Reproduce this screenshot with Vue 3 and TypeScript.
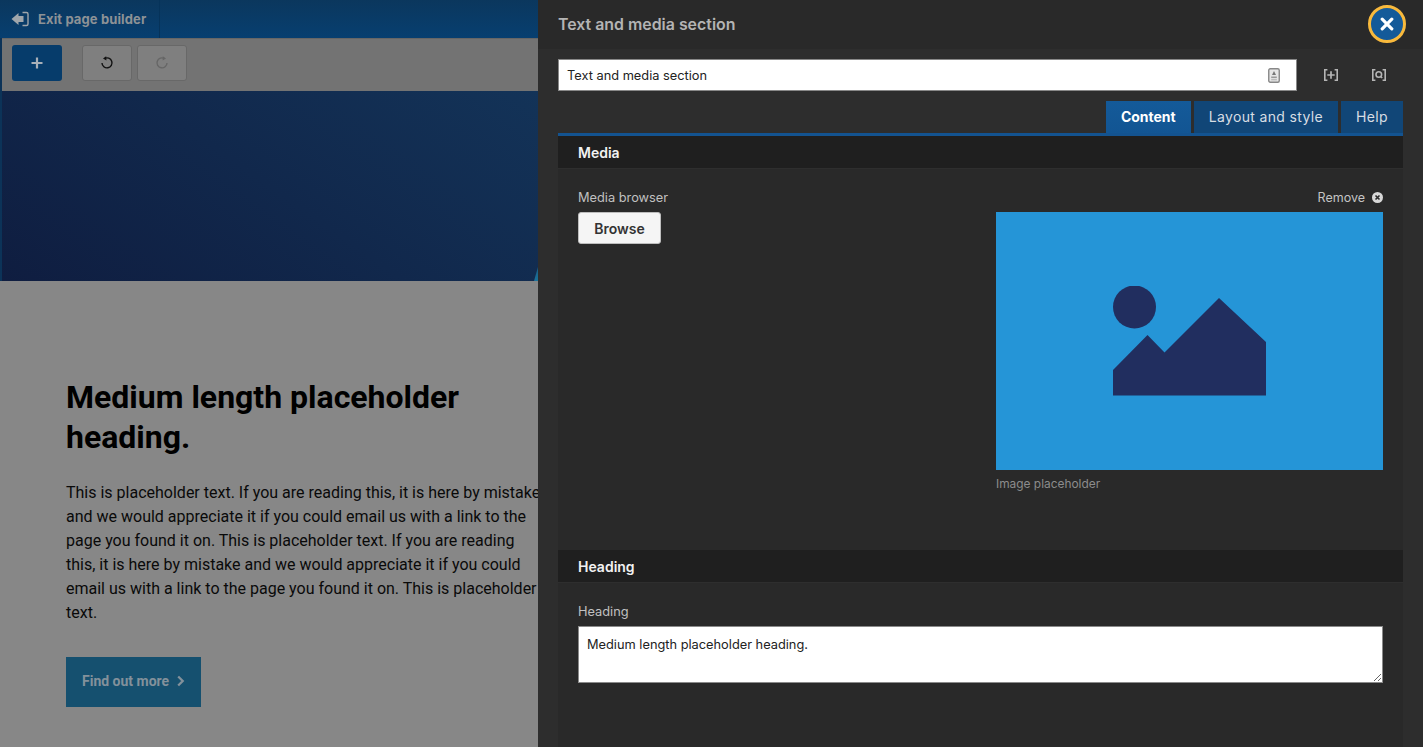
<script setup lang="ts">
const tabs: { label: string; active?: boolean }[] = [
  { label: 'Content', active: true },
  { label: 'Layout and style' },
  { label: 'Help' },
]
</script>

<template>
  <div class="app">
    <section class="page">
      <header class="topbar">
        <a class="exit">
          <svg width="18" height="16" viewBox="0 0 18 16" class="exit-icon">
            <path d="M0.5 8 L7.500 2 V5 H12.500 V11 H7.500 V14 Z" fill="#a0a6ab" />
            <path d="M11.5 1.5 H15.5 Q17 1.5 17 3 V13 Q17 14.5 15.5 14.5 H11.5" fill="none" stroke="#a0a6ab" stroke-width="1.4" />
          </svg>
          <span>Exit page builder</span>
        </a>
      </header>
      <div class="stage">
        <div class="toolbar">
          <button class="add">
            <svg width="12" height="12" viewBox="0 0 12 12"><path d="M6 .5v11M.5 6h11" stroke="#a8b0b8" stroke-width="2.2" /></svg>
          </button>
          <button class="tool first">
            <svg width="14" height="14" viewBox="0 0 14 14"><path d="M4.600 2.500 A5 5 0 1 1 2 7" fill="none" stroke="#111" stroke-width="1.400" /><path d="M6.200 .2 L3 2.600 L6.400 4.600 Z" fill="#111" /></svg>
          </button>
          <button class="tool">
            <svg width="14" height="14" viewBox="0 0 14 14"><path d="M9.400 2.500 A5 5 0 1 0 12 7" fill="none" stroke="#666" stroke-width="1.400" /><path d="M7.800 .2 L11 2.600 L7.600 4.600 Z" fill="#666" /></svg>
          </button>
        </div>
        <div class="hero"><span class="hero-sliver"></span></div>
      </div>
      <div class="content">
        <h1>Medium length placeholder heading.</h1>
        <p>This is placeholder text. If you are reading this, it is here by mistake and we would appreciate it if you could email us with a link to the page you found it on. This is placeholder text. If you are reading this, it is here by mistake and we would appreciate it if you could email us with a link to the page you found it on. This is placeholder text.</p>
        <a class="cta">
          <span>Find out more</span>
          <svg width="8" height="12" viewBox="0 0 8 12"><path d="M1.2 1.500 L5.700 6 L1.200 10.500" fill="none" stroke="#83919b" stroke-width="2.300" /></svg>
        </a>
      </div>
    </section>

    <aside class="panel">
      <header class="panel-head">
        <h2>Text and media section</h2>
        <button class="close" aria-label="Close">
          <svg width="14" height="14" viewBox="0 0 14 14"><path d="M2.2 2.2 L11.8 11.8 M11.8 2.2 L2.2 11.8" stroke="#fff" stroke-width="3.2" stroke-linecap="round" /></svg>
        </button>
      </header>
      <div class="panel-body">
        <div class="title-row">
          <div class="title-input">
            <span>Text and media section</span>
            <svg width="12" height="15" viewBox="0 0 12 15">
              <rect x=".75" y=".75" width="10.5" height="13.5" rx="1.5" fill="#e6e6e6" stroke="#888" stroke-width="1.4" />
              <path d="M6 3 L8 7 H4 Z" fill="#777" /><rect x="3.2" y="8.5" width="5.6" height="1.6" fill="#999" /><rect x="3.2" y="11" width="5.6" height="1.4" fill="#bbb" />
            </svg>
          </div>
          <button class="icon-btn first-icon">
            <svg width="14" height="12" viewBox="0 0 14 12" fill="none" stroke="#b5b5b5" stroke-width="1.600">
              <path d="M3.400 .8 H.8 V11.200 H3.400 M10.600 .8 H13.200 V11.200 H10.600" /><path d="M7 2.300 V9.700 M3.300 6 H10.700" stroke-width="1.700" />
            </svg>
          </button>
          <button class="icon-btn">
            <svg width="14" height="12" viewBox="0 0 14 12" fill="none" stroke="#b5b5b5" stroke-width="1.600">
              <path d="M3.400 .8 H.8 V11.200 H3.400 M10.600 .8 H13.200 V11.200 H10.600" /><circle cx="6.800" cy="5.500" r="2.800" /><path d="M8.700 7.500 L10.200 9" />
            </svg>
          </button>
        </div>

        <nav class="tabs">
          <a v-for="tab in tabs" :key="tab.label" class="tab" :class="{ active: tab.active }">{{ tab.label }}</a>
        </nav>

        <div class="form">
          <h3 class="section-title">Media</h3>
          <div class="media">
            <div class="media-left">
              <label>Media browser</label>
              <button class="browse">Browse</button>
            </div>
            <div class="media-right">
              <div class="remove">
                <span>Remove</span>
                <svg width="11" height="11" viewBox="0 0 11 11">
                  <circle cx="5.5" cy="5.5" r="5.5" fill="#d8d8d8" />
                  <path d="M3.5 3.5 L7.5 7.5 M7.5 3.5 L3.5 7.5" stroke="#2a2a2a" stroke-width="1.6" />
                </svg>
              </div>
              <div class="placeholder">
                <svg width="154" height="110" viewBox="0 0 154 110">
                  <circle cx="21.500" cy="21" r="21.500" fill="#212e5f" />
                  <path d="M0 109.500 V84 L34.500 49 L51.500 66.500 L106 12 L153 56 V109.500 Z" fill="#212e5f" />
                </svg>
              </div>
              <div class="caption">Image placeholder</div>
            </div>
          </div>

          <h3 class="section-title">Heading</h3>
          <div class="heading-field">
            <label>Heading</label>
            <textarea readonly>Medium length placeholder heading.</textarea>
          </div>
        </div>
      </div>
    </aside>
  </div>
</template>

<style scoped>
.app {
  display: flex;
  width: 1423px;
  height: 747px;
  overflow: hidden;
}
.page {
  width: 538px;
  flex: none;
  background: #878787;
  font-family: Roboto, sans-serif;
  display: flex;
  flex-direction: column;
  overflow: hidden;
}
.topbar {
  height: 38px;
  flex: none;
  background: linear-gradient(#0b375d, #073f70);
  display: flex;
}
.exit {
  width: 160px;
  box-sizing: border-box;
  display: flex;
  align-items: center;
  gap: 9px;
  padding: 0 0 1px 11px;
  border-right: 1px solid #06335a;
  color: #8d9296;
  font: 700 13px Inter, sans-serif;
  letter-spacing: .12px;
}
.exit-icon { flex: none; }
.stage {
  flex: none;
  padding-left: 2px;
  background: #0c3358;
}
.toolbar {
  height: 53px;
  box-sizing: border-box;
  background: #737373;
  border-top: 1px solid #666;
  display: flex;
  align-items: flex-start;
  padding: 6px 0 0 10px;
  gap: 5px;
}
.toolbar button { display: flex; align-items: center; justify-content: center; padding: 0; }
.add {
  width: 50px;
  height: 36px;
  background: #063c6b;
  border: 0;
  border-radius: 3px;
  margin-right: 15px;
}
.tool {
  width: 50px;
  height: 36px;
  background: #7f7f7f;
  border: 1px solid #686868;
  border-radius: 3px;
}
.hero {
  height: 190px;
  background: linear-gradient(35deg, #0f1d40, #133358);
  position: relative;
  overflow: hidden;
}
.hero-sliver {
  position: absolute;
  right: 0;
  bottom: 0;
  width: 4px;
  height: 14px;
  background: linear-gradient(#1b5f86, #1a7199);
  clip-path: polygon(100% 0, 100% 100%, 0 100%);
}
.content {
  margin-left: 2px;
  padding: 96px 0 0 64px;
  color: #000;
}
h1 {
  margin: 0;
  width: 430px;
  font-size: 32px;
  line-height: 40px;
  font-weight: 700;
  color: #000;
}
.content p {
  margin: 24px 0 0;
  width: 477px;
  font-size: 16px;
  line-height: 24px;
  color: #0a0a0a;
}
.cta {
  margin-top: 32px;
  width: 135px;
  height: 50px;
  box-sizing: border-box;
  padding: 0 0 2px 16px;
  display: flex;
  align-items: center;
  gap: 8px;
  background: #15506f;
  color: #83919b;
  font-size: 14px;
  font-weight: 700;
}
.panel {
  width: 885px;
  flex: none;
  background: #2d2d2d;
  font-family: Inter, sans-serif;
  display: flex;
  flex-direction: column;
}
.panel-head {
  height: 49px;
  flex: none;
  box-sizing: border-box;
  background: #292929;
  display: flex;
  align-items: center;
  justify-content: space-between;
  padding: 0 17px 1px 20px;
}
h2 {
  margin: 1px 0 0;
  font-size: 15.900px;
  line-height: 20px;
  font-weight: 600;
  color: #b4b4b4;
}
.close {
  width: 38px;
  height: 38px;
  box-sizing: border-box;
  border-radius: 50%;
  border: 3px solid #f8b93c;
  background: #145a99;
  padding: 0;
  display: flex;
  align-items: center;
  justify-content: center;
}
.panel-body {
  margin: 0 20px;
  flex: 1;
  background: #292929;
  min-height: 0;
}
.title-row {
  display: flex;
  align-items: center;
  padding-top: 10px;
  background: #2d2d2d;
  margin: 0 -20px;
  padding-left: 20px;
  padding-right: 20px;
}
.title-input {
  width: 739px;
  height: 32px;
  box-sizing: border-box;
  background: #fff;
  border: 1px solid #888;
  display: flex;
  align-items: center;
  justify-content: space-between;
  padding: 0 16px 0 8px;
  color: #222;
  font-size: 12.800px;
}
.icon-btn {
  width: 48px;
  height: 32px;
  padding: 0;
  background: transparent;
  border: 0;
  display: flex;
  align-items: center;
  justify-content: center;
}
.first-icon { margin-left: 10px; }
.tabs {
  display: flex;
  justify-content: flex-end;
  gap: 3px;
  height: 32px;
  padding-top: 10px;
  background: #2d2d2d;
  margin: 0 -20px;
  padding-right: 20px;
}
.tab {
  height: 32px;
  box-sizing: border-box;
  padding: 0 15px;
  background: #114677;
  color: #d7dde3;
  font-size: 14px;
  line-height: 32px;
  letter-spacing: .35px;
}
.tab.active {
  background: linear-gradient(#145a99, #125593);
  color: #fff;
  font-weight: 700;
  letter-spacing: 0;
}
.form {
  border-top: 3px solid #135390;
}
.section-title {
  margin: 0;
  height: 33px;
  box-sizing: border-box;
  background: #1f1f1f;
  border-bottom: 1px solid #2e2e2e;
  padding-left: 20px;
  color: #f2f2f2;
  font-size: 14px;
  font-weight: 600;
  line-height: 33px;
}
.media {
  height: 381px;
  box-sizing: border-box;
  padding: 18px 20px 0;
  display: flex;
  justify-content: space-between;
}
label {
  display: block;
  font-size: 12.800px;
  line-height: 22px;
  color: #c0c0c0;
}
.browse {
  display: block;
  margin-top: 3px;
  width: 83px;
  height: 32px;
  padding: 0;
  background: #f5f5f5;
  border: 1px solid #bdbdbd;
  border-radius: 3px;
  color: #333;
  font: 600 14px Inter, sans-serif;
}
.media-right { width: 387px; }
.remove {
  height: 25px;
  display: flex;
  justify-content: flex-end;
  gap: 7px;
  color: #c4c4c4;
  font-size: 12.500px;
  line-height: 22px;
}
.remove svg { margin-top: 5px; }
.placeholder {
  height: 258px;
  background: #2595d7;
  display: flex;
  align-items: center;
  justify-content: center;
}
.placeholder svg { margin-left: 1px; }
.caption {
  margin-top: 6px;
  font-size: 11.900px;
  line-height: 16px;
  color: #8c8c8c;
}
.heading-field {
  padding: 18px 20px 0;
}
textarea {
  display: block;
  width: 805px;
  height: 57px;
  margin-top: 3px;
  box-sizing: border-box;
  padding: 9px 8px;
  background: #fff;
  border: 1px solid #8a8a8a;
  border-radius: 0;
  outline: 0;
  color: #222;
  font: 12.800px/18px Inter, sans-serif;
}
</style>
